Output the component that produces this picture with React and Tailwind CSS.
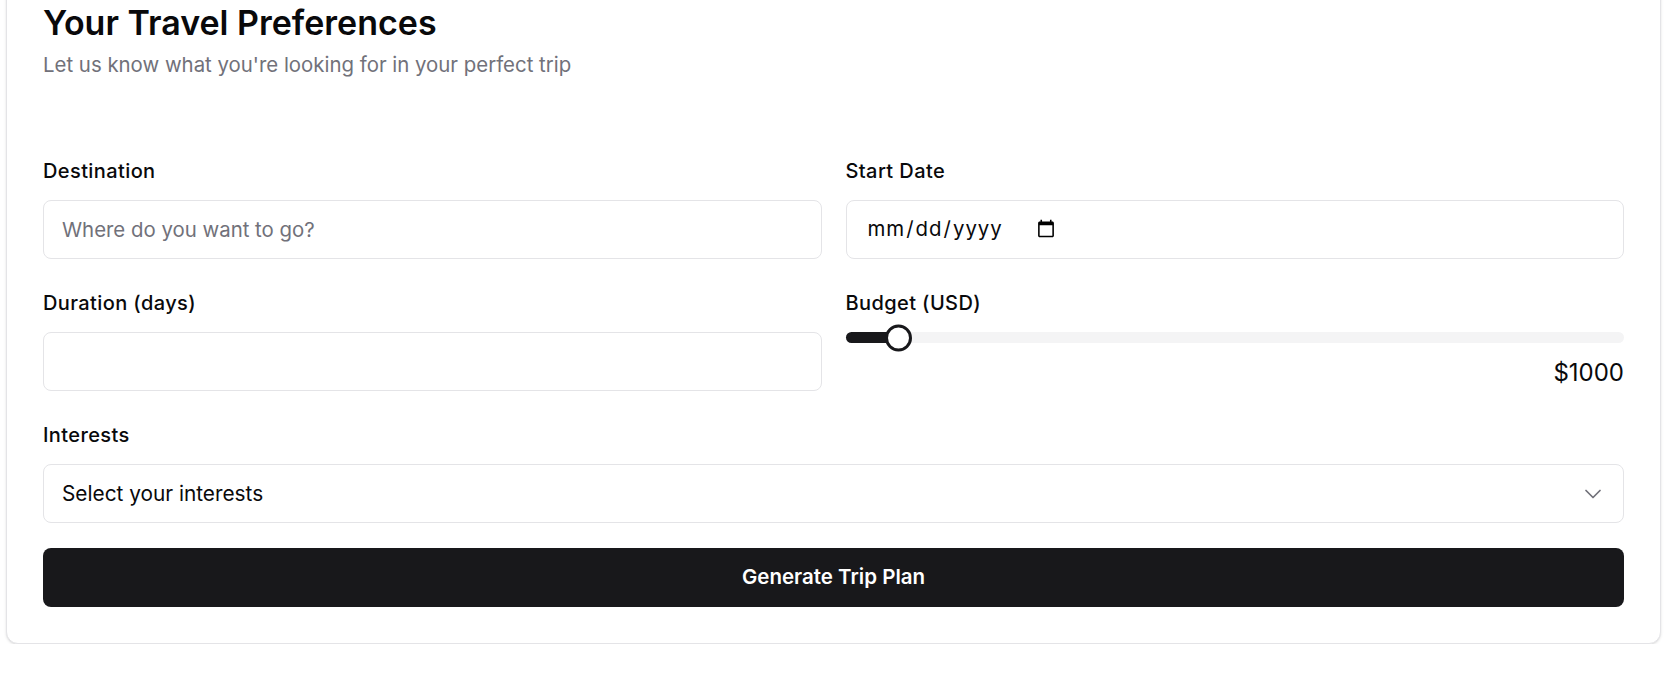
import { ChevronDown } from 'lucide-react'

function Label({ children }) {
  return (
    <label className="block text-[20px] leading-[28px] font-medium tracking-[0.4px] text-[#09090b]">
      {children}
    </label>
  )
}

function Field({ label, children }) {
  return (
    <div className="flex flex-col gap-[15px]">
      <Label>{label}</Label>
      {children}
    </div>
  )
}

function BudgetSlider({ value, min, max }) {
  const pct = ((value - min) / (max - min)) * 100
  return (
    <div className="flex flex-col">
      <div className="relative h-[11px] w-full rounded-full bg-[#f4f4f5]">
        <div
          className="absolute left-0 top-0 h-full rounded-full bg-[#18181b]"
          style={{ width: `calc(${pct}% + 13px)` }}
        />
        <div
          className="absolute top-1/2 h-[27px] w-[27px] -translate-y-1/2 rounded-full border-[3px] border-[#18181b] bg-white"
          style={{ left: `calc(${pct}% - ${(pct / 100) * 27}px)` }}
        />
      </div>
      <div className="mt-4 text-right text-[24px] leading-[28px] text-[#09090b]">${value}</div>
    </div>
  )
}

export default function App() {
  const inputCls =
    "h-[59px] w-full rounded-lg border border-[#e4e4e7] bg-white text-[20.4px] text-[#09090b] placeholder:text-[#71717a] outline-none"

  return (
    <div className="min-h-screen bg-white font-['Inter',sans-serif]">
      <div className="ml-[6px] mt-[-34px] w-[1655px] rounded-xl border border-[#e4e4e7] bg-white shadow-sm">
        <div className="px-9 pt-9">
          <h2 className="text-[34px] leading-[40px] font-semibold text-[#09090b]">
            Your Travel Preferences
          </h2>
          <p className="mt-2 text-[20.4px] leading-[28px] text-[#71717a]">
            Let us know what you're looking for in your perfect trip
          </p>
        </div>

        <div className="px-9 pb-9 pt-[78px]">
          <div className="grid grid-cols-2 gap-x-6 gap-y-[30px]">
            <Field label="Destination">
              <input className={inputCls + " px-[18px]"} placeholder="Where do you want to go?" />
            </Field>
            <Field label="Start Date">
              <input
                type="date"
                className={inputCls + " px-5 tracking-[1px] [&::-webkit-datetime-edit]:flex-none"}
              />
            </Field>
            <Field label="Duration (days)">
              <input type="number" className={inputCls + " px-[18px]"} />
            </Field>
            <Field label="Budget (USD)">
              <BudgetSlider value={1000} min={500} max={10000} />
            </Field>
            <div className="col-span-2">
              <Field label="Interests">
                <button className="flex h-[59px] w-full items-center justify-between rounded-lg border border-[#e4e4e7] bg-white pl-[18px] pr-4 text-left text-[20.8px] text-[#09090b]">
                  <span>Select your interests</span>
                  <ChevronDown size={28} strokeWidth={1.5} className="text-[#71717a]" />
                </button>
              </Field>
            </div>
          </div>

          <button className="mt-[25px] flex h-[59px] w-full items-center justify-center rounded-lg bg-[#18181b] text-[20.5px] font-semibold text-white">
            Generate Trip Plan
          </button>
        </div>
      </div>
    </div>
  )
}
